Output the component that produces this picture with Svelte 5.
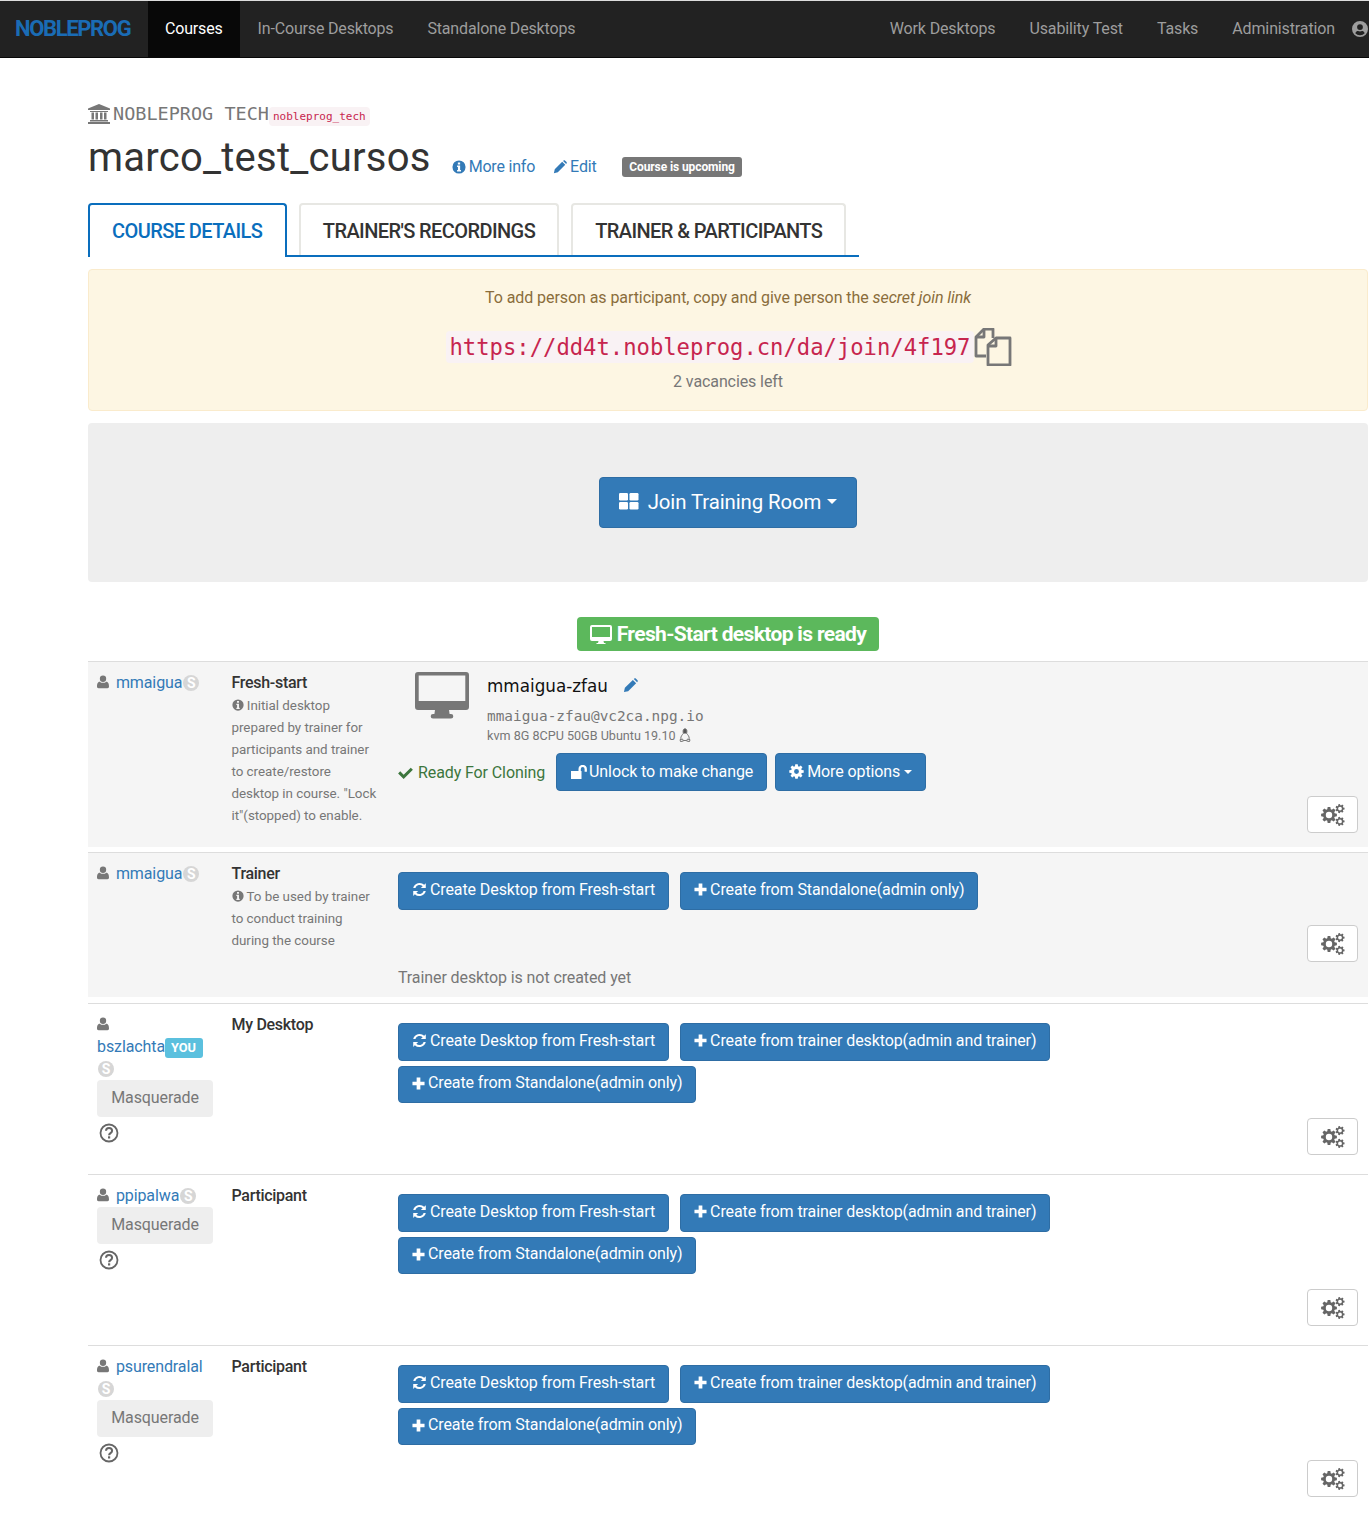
<script>
  const leftNav = ['In-Course Desktops', 'Standalone Desktops'];
  const rightNav = ['Work Desktops', 'Usability Test', 'Tasks', 'Administration'];
  const tabs = ['COURSE DETAILS', "TRAINER'S RECORDINGS", 'TRAINER & PARTICIPANTS'];
  const people = [
    { name: 'bszlachta', you: true, role: 'My Desktop' },
    { name: 'ppipalwa', role: 'Participant' },
    { name: 'psurendralal', role: 'Participant' }
  ];

  // toothed wheel with a hole, used for the cog icons
  function gear(cx, cy, r, hole, teeth = 8) {
    const pts = [];
    const step = (Math.PI * 2) / teeth;
    for (let i = 0; i < teeth; i++) {
      const a = i * step;
      [[-0.3, r * 0.74], [-0.17, r], [0.17, r], [0.3, r * 0.74]].forEach(([o, d]) => {
        const t = a + o * step * 1.25;
        pts.push(`${(cx + Math.cos(t) * d).toFixed(2)} ${(cy + Math.sin(t) * d).toFixed(2)}`);
      });
    }
    const ring = `M${cx - hole} ${cy}a${hole} ${hole} 0 1 0 ${hole * 2} 0a${hole} ${hole} 0 1 0 ${-hole * 2} 0z`;
    return `M${pts.join('L')}z${ring}`;
  }
</script>

{#snippet user()}
  <svg class="ic user" viewBox="0 0 14 16"><circle cx="7" cy="4.2" r="3.7"/><path d="M1.8 15.2C.7 15.2 0 14.4 0 13.3 0 10.4.7 7.6 3.2 7.6 4.2 8.5 5.5 9 7 9s2.8-.5 3.800-1.400C13.300 7.600 14 10.400 14 13.300c0 1.100-.7 1.900-1.800 1.900z"/></svg>
{/snippet}

{#snippet info(cls)}
  <svg class="ic {cls}" viewBox="0 0 16 16"><path fill-rule="evenodd" d="M8 .5a7.500 7.500 0 1 0 0 15 7.500 7.500 0 0 0 0-15zM6.700 2.800h2.600v2.200H6.700zM5.800 6.200h3.500v5.300h1v1.700H5.800v-1.700h1V7.900h-1z"/></svg>
{/snippet}

{#snippet pencil(cls)}
  <svg class="ic {cls}" viewBox="0 0 16 16"><path d="M1 15l1-4.500 8.500-8.500 3.500 3.500L5.500 14zM11.500 1l.6-.5c.5-.4 1.100-.4 1.500 0l1.900 1.900c.4.400.4 1 0 1.500l-.5.600z"/></svg>
{/snippet}

{#snippet skype()}
  <span class="skype">S</span>
{/snippet}

{#snippet refresh()}
  <svg class="ic btn-ic" viewBox="0 0 16 16"><path d="M14.700 1.200v5.300H9.400l2-2A4.700 4.700 0 0 0 3.600 6.300H1.300A7 7 0 0 1 13 3zM1.300 14.800V9.500h5.300l-2 2a4.700 4.700 0 0 0 7.800-1.800h2.300A7 7 0 0 1 3 13z"/></svg>
{/snippet}

{#snippet plus()}
  <svg class="ic btn-ic plus" viewBox="0 0 14 14"><path d="M5 .5h4V5h4.500v4H9v4.500H5V9H.5V5H5z"/></svg>
{/snippet}

{#snippet gears()}
  <button class="gear-btn" aria-label="settings">
    <svg class="ic gears" viewBox="0 0 24 22">
      <path fill-rule="evenodd" d={gear(8, 11, 8, 3.2)}/>
      <path fill-rule="evenodd" d={gear(19, 4.600, 4.600, 1.900, 7)}/>
      <path fill-rule="evenodd" d={gear(19, 17.400, 4.600, 1.900, 7)}/>
    </svg>
  </button>
{/snippet}

{#snippet help()}
  <svg class="ic help" viewBox="0 0 20 20"><circle cx="10" cy="10" r="8.500" fill="none" stroke="currentColor" stroke-width="1.800"/><path d="M7 7.800C7 6 8.300 5 10 5s3.100 1.100 3.100 2.800c0 2.400-3 2.300-3 4.400" fill="none" stroke="currentColor" stroke-width="2"/><rect x="9" y="13.300" width="2.200" height="2.200"/></svg>
{/snippet}

<nav class="navbar">
  <span class="brand">NOBLEPROG</span>
  <span class="nav-item active">Courses</span>
  {#each leftNav as item}
    <span class="nav-item left">{item}</span>
  {/each}
  <span class="nav-space"></span>
  {#each rightNav as item}
    <span class="nav-item">{item}</span>
  {/each}
  <svg class="ic nav-user" viewBox="0 0 16 16"><path fill-rule="evenodd" d="M8 0a8 8 0 1 0 0 16A8 8 0 0 0 8 0zm0 3.200a2.900 2.900 0 1 1 0 5.800 2.900 2.900 0 0 1 0-5.800zM3.300 12.300C3.800 10.600 5 10 6 10c.6.300 1.300.4 2 .4s1.400-.1 2-.4c1 0 2.200.6 2.700 2.300A6 6 0 0 1 8 14.300a6 6 0 0 1-4.700-2z"/></svg>
</nav>

<main class="page">
  <div class="org">
    <svg class="ic bank" viewBox="0 0 22 20"><path d="M11 0l11 4.500V6H0V4.500zM2 7h18v1H2zM3.500 8.500h2.500v7H3.500zM7.500 8.500H10v7H7.500zM12 8.500h2.500v7H12zM16 8.500h2.500v7H16zM2 16h18v1.500H2zM0 18h22v2H0z"/></svg>
    <span class="org-name">NOBLEPROG TECH</span>
    <code class="org-code">nobleprog_tech</code>
  </div>

  <div class="head">
    <h1>marco_test_cursos</h1>
    <a class="head-link info-link">{@render info('link-ic')}More info</a>
    <a class="head-link edit-link">{@render pencil('link-ic')}Edit</a>
    <span class="label-upcoming">Course is upcoming</span>
  </div>

  <div class="tabs">
    {#each tabs as tab, i}
      <div class="tab" class:on={i === 0}>{tab}</div>
    {/each}
  </div>

  <section class="alert">
    <div class="alert-text">To add person as participant, copy and give person the <em>secret join link</em></div>
    <div class="join-line">
      <code class="join-url">https://dd4t.nobleprog.cn/da/join/4f197</code>
      <svg class="copy" viewBox="0 0 38 38" fill="none" stroke="#777" stroke-width="2.800" stroke-linejoin="round"><path d="M12 28H2V9l8-8h9v9"/><path d="M10 1v8H2"/><path d="M14 37V17l8-7h14v27z"/><path d="M22 10v8h-8"/></svg>
    </div>
    <div class="vacancies">2 vacancies left</div>
  </section>

  <section class="well">
    <button class="btn join">
      <svg class="ic join-ic" viewBox="0 0 20 17"><rect width="9" height="7.500" rx="1.200"/><rect x="10.500" width="9" height="7.500" rx="1.200"/><rect y="9" width="9" height="7.500" rx="1.200"/><rect x="10.500" y="9" width="9" height="7.500" rx="1.200"/></svg>
      Join Training Room <span class="caret big"></span>
    </button>
  </section>

  <div class="ready-wrap">
    <span class="label-ready">
      <svg class="ic ready-ic" viewBox="0 0 22 19"><path fill-rule="evenodd" d="M2 0h18a2 2 0 0 1 2 2v12a2 2 0 0 1-2 2h-6.500l.5 2h1.500v1h-9v-1H8l.5-2H2a2 2 0 0 1-2-2V2a2 2 0 0 1 2-2zm0 2v10h18V2z"/></svg>
      Fresh-Start desktop is ready
    </span>
  </div>

  <div class="row shaded fresh">
    <div class="who">{@render user()} <a class="name">mmaigua</a>{@render skype()}</div>
    <div class="role">
      <strong>Fresh-start</strong>
      <p>{@render info('note-ic')} Initial desktop prepared by trainer for participants and trainer to create/restore desktop in course. "Lock it"(stopped) to enable.</p>
    </div>
    <div class="main">
      <div class="desktop">
        <svg class="ic desktop-ic" viewBox="0 0 54 47"><path fill-rule="evenodd" d="M3 0h48a3 3 0 0 1 3 3v32a3 3 0 0 1-3 3H34l.6 4h1.400a2.300 2.300 0 0 1 0 4.600H18a2.300 2.300 0 0 1 0-4.600h1.400l.6-4H3a3 3 0 0 1-3-3V3a3 3 0 0 1 3-3zm.700 3.500v25.500h46.600V3.500z"/></svg>
        <div class="desktop-info">
          <div class="desktop-name">mmaigua-zfau {@render pencil('name-edit')}</div>
          <div class="desktop-host">mmaigua-zfau@vc2ca.npg.io</div>
          <div class="desktop-spec">kvm 8G 8CPU 50GB Ubuntu 19.10
            <svg class="tux" viewBox="0 0 12 14" fill="none" stroke="#777" stroke-width="1"><path d="M4.300 5.500c0-.5-.2-1.200-.2-2.200C4.100 1.800 4.700.8 6 .8s1.900 1 1.900 2.500c0 1 -.2 1.700-.2 2.200" fill="#555"/><path d="M4.300 5.500C3 7 1.800 8.500 1.800 10.200c0 .5.100.9.400 1.200M7.700 5.500C9 7 10.200 8.500 10.200 10.200c0 .5-.1.900-.4 1.200"/><path d="M1 11.700l2.500-.7 1 2-3 .6zM11 11.700l-2.500-.7-1 2 3 .6zM4.500 12.500h3"/></svg>
          </div>
        </div>
      </div>
      <div class="actions">
        <span class="status">
          <svg class="ic check" viewBox="0 0 16 13"><path d="M0 7l2.300-2.300L6 8.400 13.700.7 16 3 6 13z"/></svg>
          Ready For Cloning
        </span>
        <button class="btn unlock">
          <svg class="ic lock" viewBox="0 0 17 14"><path d="M1 6h7.500V4a4.200 4.200 0 0 1 8.400 0v2.800h-2.300V4a1.900 1.900 0 0 0-3.800 0v2h.7v8H1z"/></svg>Unlock to make change
        </button>
        <button class="btn">
          <svg class="ic btn-ic" viewBox="0 0 16 16"><path fill-rule="evenodd" d={gear(8, 8, 7.800, 2.600)}/></svg>More options <span class="caret"></span>
        </button>
      </div>
    </div>
    {@render gears()}
  </div>

  <div class="row shaded trainer">
    <div class="who">{@render user()} <a class="name">mmaigua</a>{@render skype()}</div>
    <div class="role">
      <strong>Trainer</strong>
      <p>{@render info('note-ic')} To be used by trainer to conduct training during the course</p>
    </div>
    <div class="main">
      <div class="btns">
        <button class="btn">{@render refresh()}Create Desktop from Fresh-start</button>
        <button class="btn">{@render plus()}Create from Standalone(admin only)</button>
      </div>
      <div class="not-yet">Trainer desktop is not created yet</div>
    </div>
    {@render gears()}
  </div>

  {#each people as p}
    <div class="row">
      <div class="who">
        {@render user()} <span class="name-line"><a class="name">{p.name}</a>{#if p.you}<span class="you">YOU</span>{/if}</span>{@render skype()}
        <button class="masq">Masquerade</button>
        <div class="help-line">{@render help()}</div>
      </div>
      <div class="role"><strong>{p.role}</strong></div>
      <div class="main">
        <div class="btns">
          <button class="btn">{@render refresh()}Create Desktop from Fresh-start</button>
          <button class="btn">{@render plus()}Create from trainer desktop(admin and trainer)</button>
          <button class="btn">{@render plus()}Create from Standalone(admin only)</button>
        </div>
      </div>
      {@render gears()}
    </div>
  {/each}
</main>

<style>
  :global(body) { margin: 0; background: #fff; font-family: Roboto, sans-serif; font-size: 16px; line-height: 22px; color: #333; letter-spacing: -0.1px; overflow-x: hidden; }
  .ic { fill: currentColor; display: inline-block; flex: none; }

  .navbar {
    height: 56px; display: flex; align-items: stretch; background: #222;
    border-top: 1px solid #ddd; border-bottom: 1px solid #080808; overflow: hidden;
  }
  .brand {
    width: 148px; box-sizing: border-box; padding-left: 15px; line-height: 56px;
    font-size: 22px; font-weight: 700; letter-spacing: -1.350px; color: #1a6cb5;
  }
  .nav-item { padding: 0 17px; line-height: 56px; color: #9d9d9d; white-space: nowrap; letter-spacing: -0.125px; }
  .nav-item.left { letter-spacing: -0.170px; position: relative; left: 1px; }
  .nav-item.active { background: #080808; color: #fff; letter-spacing: -0.170px; }
  .nav-space { flex: 1; }
  .nav-user { width: 16px; height: 16px; color: #9d9d9d; align-self: center; flex: none; margin-right: 1px; }

  .page { padding: 43px 1px 9px 88px; }

  .org { display: flex; align-items: center; height: 26px; color: #777; letter-spacing: 0; }
  .bank { width: 22px; height: 20px; margin-right: 3px; }
  .org-name { font-family: "DejaVu Sans Mono", monospace; font-size: 18.500px; white-space: pre; }
  .org-code {
    font-family: "DejaVu Sans Mono", monospace; font-size: 11px; color: #c7254e; background: #f9f2f4;
    padding: 2px 4px; border-radius: 4px; margin-top: 4px; line-height: 15px;
  }

  .head { display: flex; align-items: center; height: 48px; margin-top: 7px; }
  h1 { margin: 0 21px 0 0; font-size: 40px; font-weight: 400; line-height: 48px; color: #333; letter-spacing: 0.240px; }
  .head-link { color: #337ab7; display: inline-flex; align-items: center; margin-top: 18px; }
  .info-link { margin-right: 18px; letter-spacing: -0.200px; }
  .link-ic { width: 14px; height: 14px; margin-right: 3px; }
  .label-upcoming {
    margin: 18px 0 0 25px; background: #777; color: #fff; font-size: 12px; font-weight: 700; letter-spacing: -0.100px;
    border-radius: 3px; padding: 0 7.500px; height: 20px; line-height: 20px; box-sizing: border-box;
  }

  .tabs { display: flex; gap: 12px; margin-top: 21px; width: 771px; height: 54px; box-sizing: border-box; border-bottom: 2px solid #0a6ebd; }
  .tab {
    box-sizing: border-box; height: 52px; padding: 0 22px; line-height: 53px; font-size: 20px; font-weight: 500; letter-spacing: -0.590px;
    border: 2px solid #e7e7e3; border-bottom: none; border-radius: 4px 4px 0 0; color: #333; background: #fff; white-space: nowrap;
  }
  .tab.on { height: 54px; border-color: #0a6ebd; color: #0a6ebd; padding-right: 22.500px; }

  .alert {
    margin-top: 12px; height: 142px; box-sizing: border-box; padding-top: 17px; text-align: center;
    background: #fdf6e3; border: 1px solid #faebcc; border-radius: 4px; color: #8a6d3b;
  }
  .alert-text { letter-spacing: -0.070px; }
  .join-line { display: flex; justify-content: center; align-items: center; margin-top: 19px; height: 38px; padding-left: 2px; }
  .join-url {
    font-family: "DejaVu Sans Mono", monospace; font-size: 22.200px; line-height: 32px; color: #c7254e; letter-spacing: 0;
    background: #f9f2f4; border-radius: 4px; padding: 0 4px;
  }
  .copy { width: 38px; height: 38px; }
  .vacancies { color: #777; margin-top: 5px; }

  .well { margin-top: 12px; height: 159px; background: #eee; border-radius: 4px; display: flex; justify-content: center; align-items: center; }

  .btn {
    font: inherit; letter-spacing: -0.100px; color: #fff; background: #337ab7; border: 1px solid #2e6da4; border-radius: 4px;
    height: 37.500px; padding: 0 13px; display: inline-flex; align-items: center; white-space: nowrap;
  }
  .btn-ic { width: 15px; height: 15px; margin-right: 3px; }
  .plus { width: 13px; height: 13px; margin-right: 3px; }
  .join { height: 51px; padding: 0 19px 2px; font-size: 20.400px; }
  .join-ic { width: 20px; height: 17px; margin-right: 9px; }
  .caret { display: inline-block; border-top: 4.500px solid #fff; border-left: 4.500px solid transparent; border-right: 4.500px solid transparent; margin-left: 4px; }
  .caret.big { border-top-width: 5px; border-left-width: 5px; border-right-width: 5px; margin-left: 6px; }

  .ready-wrap { display: flex; justify-content: center; margin-top: 35px; }
  .label-ready {
    background: #5cb85c; color: #fff; border-radius: 4px; height: 34px; padding: 0 13px; display: inline-flex; align-items: center;
    font-size: 21px; font-weight: 700; letter-spacing: -0.650px;
  }
  .ready-ic { width: 22px; height: 19px; margin-right: 5px; }

  .row {
    display: grid; grid-template-columns: 134.500px 166.500px 1fr auto; box-sizing: border-box;
    min-height: 171px; padding: 10px 10px 19px 9px; border-top: 1px solid #ddd;
  }
  .shaded { background: #f5f5f5; }
  .fresh { margin-top: 10px; height: 186px; padding-bottom: 14px; }
  .trainer { margin-top: 5px; min-height: 145px; height: 145px; padding-bottom: 0; }
  .trainer .gear-btn { margin-bottom: 35px; }
  .trainer + .row { margin-top: 6px; }

  .who { width: 116px; }
  .user { width: 12px; height: 14px; color: #777; vertical-align: -1px; margin-right: 3px; }
  .name { color: #337ab7; }
  .name-line { white-space: nowrap; }
  .skype {
    display: inline-block; width: 16px; height: 16px; border-radius: 50%; background: #d6d6d6; color: #fff;
    font-size: 14px; font-weight: 700; line-height: 16px; text-align: center; vertical-align: 0; margin-left: 1px;
  }
  .you {
    display: inline-block; background: #5bc0de; color: #fff; font-size: 12.800px; font-weight: 700; line-height: 20px;
    height: 20px; padding: 0 6.500px; border-radius: 3px; vertical-align: 0; letter-spacing: 0; margin-left: -0.500px;
  }
  .masq {
    display: block; width: 116px; height: 37px; font: inherit; letter-spacing: -0.100px; color: #777; background: #eee; border: none; border-radius: 4px; padding: 0 0 2px;
  }
  .help-line { height: 22px; margin-top: 6px; padding-left: 2px; }
  .help { width: 20px; height: 20px; color: #666; }

  .role { padding-right: 18px; }
  .role strong { font-weight: 500; color: #333; display: block; letter-spacing: -0.300px; }
  .role p { margin: 1px 0 0; font-size: 13.400px; line-height: 22px; color: #777; letter-spacing: -0.030px; }
  .note-ic { width: 12px; height: 12px; vertical-align: -1px; color: #777; }

  .main { min-width: 0; }
  .desktop { display: flex; padding-left: 17px; }
  .desktop-ic { width: 54px; height: 47px; color: #777; }
  .desktop-info { margin-left: 18px; }
  .desktop-name { font-family: "DejaVu Sans", sans-serif; font-size: 16.800px; line-height: 26px; color: #111; letter-spacing: 0; margin-top: 1px; }
  .name-edit { width: 15px; height: 15px; color: #337ab7; margin-left: 10px; vertical-align: -1px; }
  .desktop-host { font-family: "DejaVu Sans Mono", monospace; font-size: 14.400px; line-height: 20px; color: #777; letter-spacing: 0; margin-top: 7px; }
  .desktop-spec { font-size: 12.600px; line-height: 18px; color: #777; letter-spacing: 0; margin-top: 1px; }
  .tux { width: 12px; height: 14px; vertical-align: -2px; }
  .actions { display: flex; align-items: center; margin-top: 8px; }
  .status { color: #3c763d; margin-right: 11px; display: inline-flex; align-items: center; padding-top: 2px; }
  .check { width: 15px; height: 12px; margin-right: 5px; }
  .unlock { margin-right: 8px; }
  .lock { width: 17px; height: 14px; margin-right: 2px; }

  .btns { display: flex; flex-wrap: wrap; gap: 5px 11px; padding-top: 9px; padding-right: 20px; }
  .btns .btn { padding-bottom: 2px; }
  .not-yet { color: #777; margin-top: 57px; }

  .gear-btn {
    width: 51px; height: 37px; align-self: end; background: #fff; border: 1px solid #ccc; border-radius: 4px; padding: 0;
    display: flex; align-items: center; justify-content: center;
  }
  .gears { width: 24px; height: 22px; color: #666; }
</style>
